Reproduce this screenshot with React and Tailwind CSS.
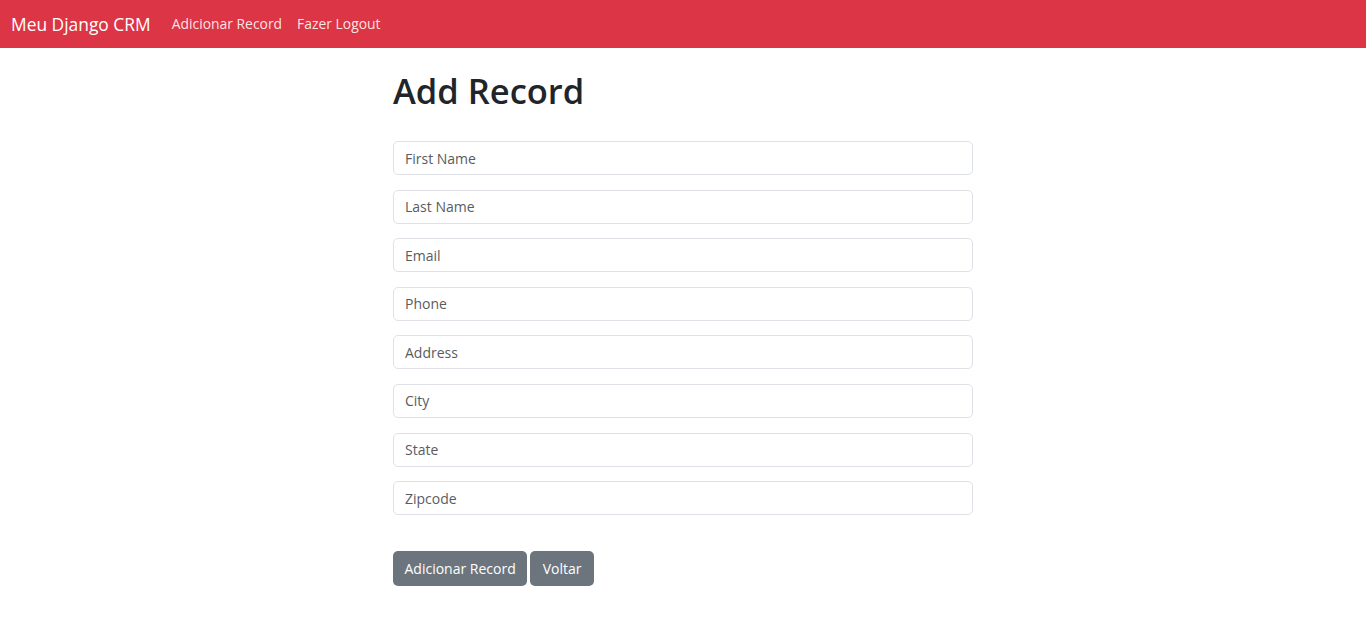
export default function App() {
  const fields = ["First Name", "Last Name", "Email", "Phone", "Address", "City", "State", "Zipcode"];
  return (
    <div className="min-h-[629px] bg-white" style={{ fontFamily: '"Open Sans", "Noto Sans", sans-serif' }}>
      <nav className="h-[48px] bg-[#dc3545] flex items-center px-[11px]">
        <span className="text-white text-[17.4px] mr-[21px]">Meu Django CRM</span>
        <span className="text-[rgba(255,255,255,0.88)] text-[13.9px] mr-[15px]">Adicionar Record</span>
        <span className="text-[rgba(255,255,255,0.88)] text-[13.9px]">Fazer Logout</span>
      </nav>
      <div className="w-[580px] mx-auto pt-[21px]">
        <h1 className="text-[34.5px] leading-[43px] font-semibold text-[#212529] mb-[29px]">Add Record</h1>
        <form className="flex flex-col gap-[14.6px]">
          {fields.map((f) => (
            <input
              key={f}
              placeholder={f}
              className="h-[34px] w-full border border-[#dee2e6] rounded-[5px] px-[11px] text-[14px] text-[#212529] placeholder:text-[#595c5f] outline-none"
            />
          ))}
          <div className="flex gap-[3px] mt-[21px]">
            <button type="button" className="h-[35px] px-[11.5px] rounded-[5px] bg-[#6c757d] text-white text-[14px]">Adicionar Record</button>
            <button type="button" className="h-[35px] px-[12.5px] rounded-[5px] bg-[#6c757d] text-white text-[14px]">Voltar</button>
          </div>
        </form>
      </div>
    </div>
  );
}
